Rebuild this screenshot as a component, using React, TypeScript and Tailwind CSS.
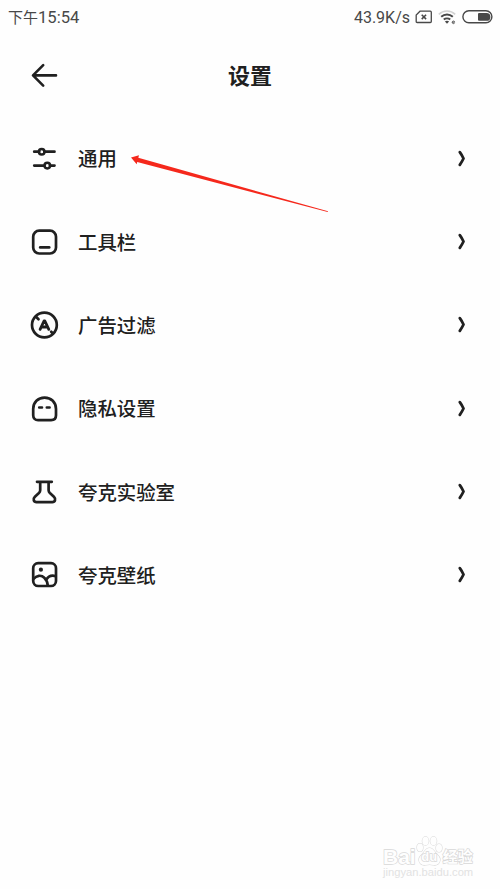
import type { ReactNode } from "react";

const icons: Record<string, ReactNode> = {
  general: (
    <>
      <path d="M6.2 8.7h5M16.3 8.7h10.2M6.2 22.6h10.2M22 22.6h4.5" />
      <circle cx="13.7" cy="8.7" r="2.8" strokeWidth="2.5" />
      <circle cx="19.3" cy="22.6" r="2.8" strokeWidth="2.5" />
    </>
  ),
  toolbar: (
    <>
      <rect x="5.2" y="4.7" width="22.8" height="22.8" rx="6" />
      <path d="M12.2 21.4h9" />
    </>
  ),
  adblock: (
    <>
      <circle cx="16.4" cy="16" r="12.4" />
      <path d="M8 7.7l2.5 2.5M23.2 22.8l1.7 1.7" />
      <path d="M12.1 20.4l3.9-8.4h.9l3.9 8.4M14.3 18h4.4" strokeWidth="2.8" />
    </>
  ),
  privacy: (
    <>
      <path d="M5.2 16C5.2 9.2 10 4.6 16.6 4.6S28 9.2 28 16v6.3c0 3-1.9 4.9-4.9 4.9h-13c-3 0-4.9-1.9-4.9-4.9Z" />
      <path d="M11.2 14.5h2.8M18.8 14.5h2.8" strokeWidth="2.6" />
    </>
  ),
  lab: (
    <path d="M9 5.8h14.8M12.2 6v8.2c0 1.2-.5 2-1.3 2.8l-4 3.7c-2.3 2.3-1.2 5.4 1.6 5.4h15.8c2.8 0 3.9-3.1 1.6-5.4l-4-3.7c-.8-.8-1.3-1.6-1.3-2.8V6" />
  ),
  wallpaper: (
    <>
      <rect x="5.2" y="4.2" width="22.8" height="22.8" rx="5" />
      <circle cx="12.9" cy="10.7" r="2.1" fill="currentColor" stroke="none" />
      <path d="M5.5 20c3-3.6 7.7-4.4 10.8-1.3 2.2 2.1 3.2 4.7 3.4 7.7M18.2 20.9c1.7-3 5-5 9.5-3.7" />
    </>
  ),
};

const items = [
  { icon: "general", label: "通用" },
  { icon: "toolbar", label: "工具栏" },
  { icon: "adblock", label: "广告过滤" },
  { icon: "privacy", label: "隐私设置" },
  { icon: "lab", label: "夸克实验室" },
  { icon: "wallpaper", label: "夸克壁纸" },
];

function StatusBar() {
  return (
    <div className="flex h-[34px] items-center justify-between pr-[7px] pl-[8px] font-['Roboto','Noto_Sans_CJK_SC',sans-serif] text-[#484848]">
      <span className="flex items-center pt-0.5 text-[16.6px] leading-none">
        <span className="text-[15px]">下午</span>
        <span>15:54</span>
      </span>
      <div className="flex items-center">
        <span className="pt-px text-[16px] leading-none">43.9K/s</span>
        {/* No SIM */}
        <svg className="ml-[5px] h-[14px] w-[18px]" viewBox="0 0 18 14" fill="none" stroke="currentColor" strokeWidth="1.3">
          <path d="M5 1.2h10.3c.6 0 1 .4 1 1v9.3c0 .6-.4 1-1 1H2.2c-.6 0-1-.4-1-1V5Z" />
          <path d="M6.7 4.7l4.4 4.4M11.1 4.7L6.7 9.1" strokeWidth="1.5" />
        </svg>
        {/* Wifi */}
        <svg className="ml-[5px] h-[16px] w-[19px]" viewBox="0 0 19 16" fill="none" stroke="currentColor" strokeWidth="2">
          <path d="M.8 5.3C5.4.9 12.6.9 17.2 5.3" stroke="#d2d2d2" strokeWidth="1.6" />
          <path d="M3.2 7.7c3.3-3 8.3-3 11.6 0M5.8 10.6c1.8-1.6 4.6-1.6 6.4 0" />
          <path d="M6.9 12.5c1.2-1 3-1 4.2 0L9 14.8Z" fill="currentColor" stroke="none" />
          <path d="M14.3 13.2h2.4c0-1.6-2.5-1.6-2.5.1 0 1.5 1.5 1.6 2.3 1" strokeWidth=".9" />
        </svg>
        {/* Battery */}
        <svg className="ml-[5px] h-[14px] w-[31px]" viewBox="0 0 31 14" fill="none">
          <rect x=".9" y=".8" width="29" height="12" rx="6" stroke="currentColor" strokeWidth="1.4" />
          <path d="M17 3h7.5a3.9 3.9 0 0 1 0 7.8H17a1 1 0 0 1-1-1V4a1 1 0 0 1 1-1Z" fill="currentColor" />
        </svg>
      </div>
    </div>
  );
}

function Watermark() {
  return (
    <div className="absolute top-[833px] left-[383px] w-[96px] text-[#fefefe]">
      <div className="flex h-[34px] items-end font-['Liberation_Sans','Noto_Sans_CJK_SC',sans-serif] leading-none font-bold [-webkit-text-stroke:1.4px_#d8d8d8] [paint-order:stroke_fill]">
        <span className="text-[21px]">Bai</span>
        <span className="relative flex h-[32px] w-[27px] items-end justify-center pb-[4px]">
          <svg className="absolute inset-0" viewBox="0 0 27 32" fill="#fefefe" stroke="#d8d8d8" strokeWidth="1.1">
            <ellipse cx="4" cy="12.5" rx="3" ry="4" />
            <ellipse cx="9.5" cy="6" rx="3.2" ry="4.2" />
            <ellipse cx="17.5" cy="6" rx="3.2" ry="4.2" />
            <ellipse cx="23" cy="13" rx="3" ry="4" />
            <path d="M13.5 13c4 0 5 4 8 7 5 4 2 11-4 10-3-.7-5-.7-8 0-6 1-9-6-4-10 3-3 4-7 8-7Z" />
          </svg>
          <span className="relative text-[13px]">du</span>
        </span>
        <span className="pb-[3px] text-[15px]">经验</span>
      </div>
      <div className="font-['Liberation_Sans',sans-serif] text-[11.2px] leading-none text-[#e2e2e2]">
        jingyan.baidu.com
      </div>
    </div>
  );
}

export default function App() {
  return (
    <div className="relative h-[889px] w-[500px] overflow-hidden bg-[#fefefe] font-['Noto_Sans_CJK_SC',sans-serif] text-[#202020]">
      <StatusBar />

      <header className="grid h-[83px] grid-cols-[60px_1fr_60px] items-center">
        <svg className="ml-7 h-8 w-8" viewBox="0 0 32 32" fill="none" stroke="currentColor" strokeWidth="2.6" strokeLinecap="round" strokeLinejoin="round">
          <path d="M15.2 5.2L5 15.4l10.2 10.2M5.4 15.4H28" />
        </svg>
        <h1 className="pb-[3px] text-center text-[22px] leading-8 font-bold">设置</h1>
      </header>

      <ul>
        {items.map((item) => (
          <li key={item.icon} className="flex h-[83.35px] items-center pr-[29px] pl-7">
            <svg className="h-8 w-8 shrink-0" viewBox="0 0 32 32" fill="none" stroke="currentColor" strokeWidth="2.7" strokeLinecap="round" strokeLinejoin="round">
              {icons[item.icon]}
            </svg>
            <span className="ml-[18px] flex-1 pb-[0.6px] text-[19.4px] leading-8 font-medium">{item.label}</span>
            <svg className="h-5 w-4 shrink-0" viewBox="0 0 16 20" fill="none" stroke="currentColor" strokeWidth="2.8" strokeLinecap="round" strokeLinejoin="round">
              <path d="M4.8 3.2C6.5 5.5 7.7 7.8 8.5 9.5c-.8 1.7-2 4-3.7 6.3" />
            </svg>
          </li>
        ))}
      </ul>

      {/* Pointer to the first row */}
      <svg className="absolute top-[150px] left-[128px] h-[66px] w-[204px]" viewBox="0 0 204 66" fill="#f5281c">
        <path d="M3 7.5L11 5.2L10.3 7.8L200 61.3L199.7 62L9.2 12L8.7 14.2Z" />
      </svg>

      <Watermark />
    </div>
  );
}
